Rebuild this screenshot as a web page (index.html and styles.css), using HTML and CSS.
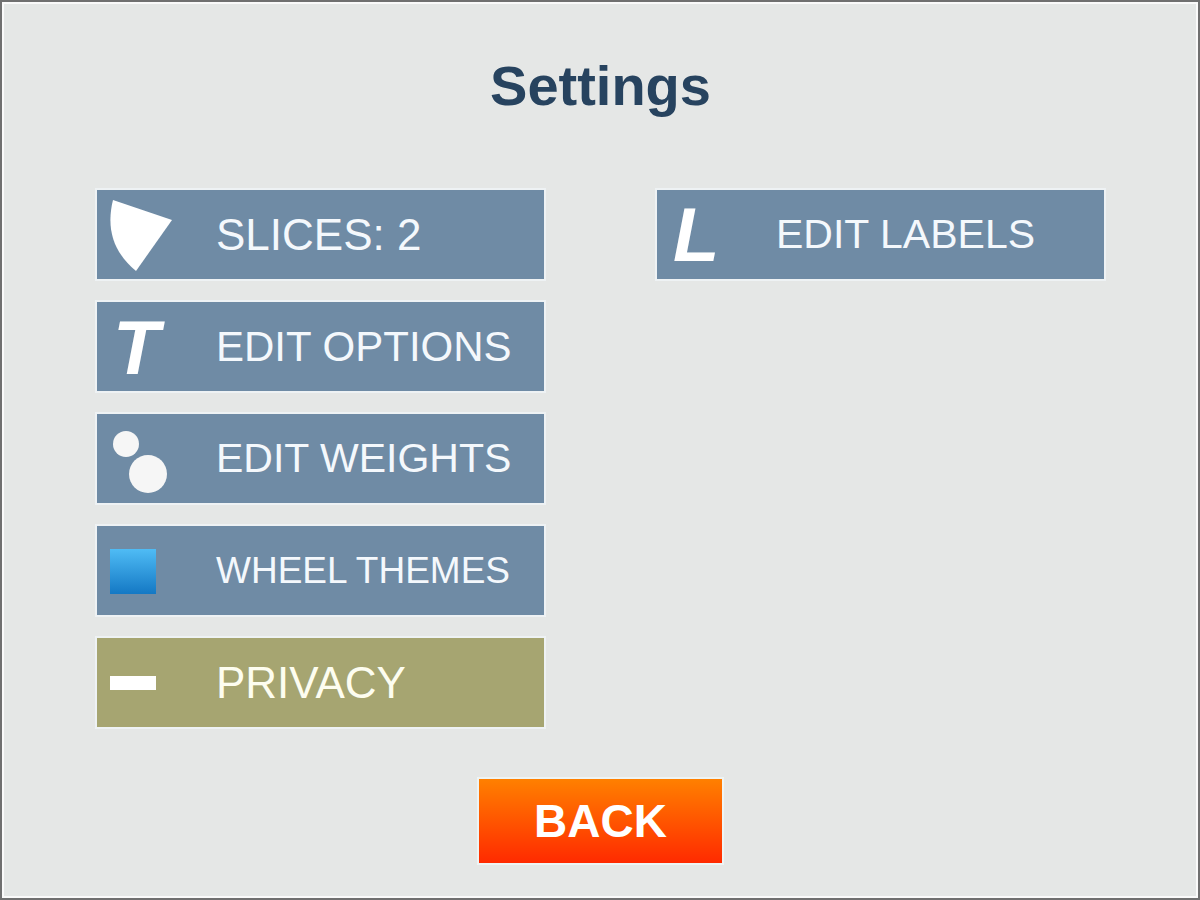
FILE: index.html
```html
<!DOCTYPE html>
<html lang="en">
<head>
    <meta charset="utf-8">
    <title>Settings</title>
    <link rel="stylesheet" href="styles.css">
</head>
<body>
<main class="settings">
    <h1 class="title">Settings</h1>

    <div class="menu">
        <!-- left column -->
        <div class="column">
            <button type="button" class="item large">
                <svg class="icon" viewBox="0 0 119 89" aria-hidden="true">
                    <path d="M75 30 L16 10 C9 38 16 62 39 81 Z" fill="#fff"/>
                </svg>
                <span>SLICES: 2</span>
            </button>
            <button type="button" class="item">
                <svg class="icon" viewBox="0 0 119 89" aria-hidden="true">
                    <text class="letter" x="16" y="72">T</text>
                </svg>
                <span>EDIT OPTIONS</span>
            </button>
            <button type="button" class="item medium">
                <svg class="icon" viewBox="0 0 119 89" aria-hidden="true">
                    <circle cx="29" cy="30" r="13" fill="#f6f6f6"/>
                    <circle cx="51" cy="60" r="19" fill="#f6f6f6"/>
                </svg>
                <span>EDIT WEIGHTS</span>
            </button>
            <button type="button" class="item small">
                <svg class="icon" viewBox="0 0 119 89" aria-hidden="true">
                    <defs>
                        <linearGradient id="themeBlue" x1="0" y1="0" x2="0" y2="1">
                            <stop offset="0" stop-color="#4fbcf5"/>
                            <stop offset="1" stop-color="#1478c4"/>
                        </linearGradient>
                    </defs>
                    <rect x="13" y="23" width="46" height="45" fill="url(#themeBlue)"/>
                </svg>
                <span>WHEEL THEMES</span>
            </button>
            <button type="button" class="item large privacy">
                <svg class="icon" viewBox="0 0 119 89" aria-hidden="true">
                    <rect x="13" y="38" width="46" height="14" fill="#fff"/>
                </svg>
                <span>PRIVACY</span>
            </button>
        </div>

        <!-- right column -->
        <div class="column">
            <button type="button" class="item medium">
                <svg class="icon" viewBox="0 0 119 89" aria-hidden="true">
                    <text class="letter" x="16" y="71">L</text>
                </svg>
                <span>EDIT LABELS</span>
            </button>
        </div>
    </div>

    <button type="button" class="back">BACK</button>
</main>
</body>
</html>
```

FILE: styles.css
```css
* {
    box-sizing: border-box;
}

body {
    margin: 0;
    font-family: "Liberation Sans", Arial, sans-serif;
    background-color: #e5e7e6;
}

.settings {
    display: flex;
    flex-direction: column;
    align-items: center;
    min-height: 100vh;
    padding: 52px 94px 35px 95px;
    border: 2px solid #707070;
    box-shadow: inset 0 0 0 2px #fafafa;
}

.title {
    margin: 0 0 72px;
    font-size: 56px;
    line-height: 64px;
    color: #27435f;
}

.menu {
    display: grid;
    grid-template-columns: 1fr 1fr;
    gap: 113px;
    width: 100%;
}

.column {
    display: flex;
    flex-direction: column;
    gap: 23px;
}

.item {
    display: flex;
    align-items: center;
    height: 89px;
    padding: 0;
    border: 0;
    background-color: #6f8ba5;
    box-shadow: 0 0 0 2px #eef2f4;
    color: #f4f8fc;
    font-family: inherit;
    font-size: 42px;
    white-space: nowrap;
    cursor: pointer;
}

.large {
    font-size: 44px;
}

.medium {
    font-size: 41px;
}

.small {
    font-size: 37px;
}

.privacy {
    background-color: #a6a571;
    color: #fdfdf0;
}

.icon {
    flex: none;
    width: 119px;
    height: 89px;
}

.letter {
    font-size: 76px;
    font-weight: bold;
    font-style: italic;
    fill: #fff;
}

/* orange button under the menu */
.back {
    width: 243px;
    height: 84px;
    margin-top: 52px;
    padding: 0;
    border: 0;
    background: linear-gradient(#ff8000, #ff2a00);
    box-shadow: 0 0 0 2px #eef4f4;
    color: #fff;
    font-family: inherit;
    font-size: 46px;
    font-weight: bold;
    cursor: pointer;
}
```
